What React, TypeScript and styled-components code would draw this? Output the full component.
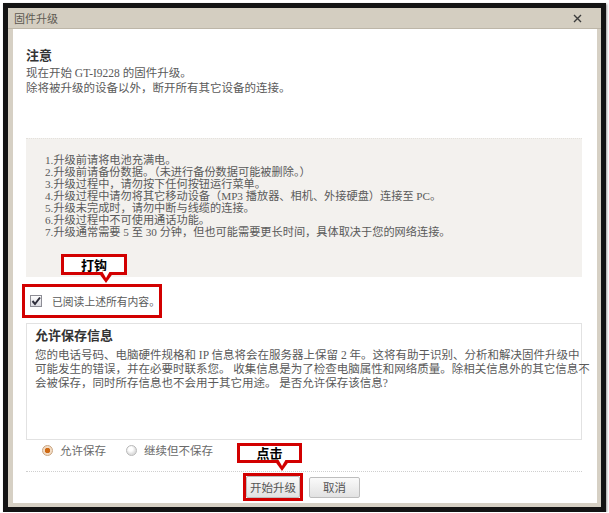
import React from 'react'
import styled, { createGlobalStyle } from 'styled-components'

const GlobalStyle = createGlobalStyle`
    html, body {
        margin: 0;
        padding: 0;
        background: #fff;
    }
    body {
        font-family: "Liberation Serif", "Noto Sans CJK SC", serif;
        color: #5a5a5a;
    }
`

const notices = [
    '1.升级前请将电池充满电。',
    '2.升级前请备份数据。（未进行备份数据可能被删除。）',
    '3.升级过程中，请勿按下任何按钮运行菜单。',
    '4.升级过程中请勿将其它移动设备（MP3 播放器、相机、外接硬盘）连接至 PC。',
    '5.升级未完成时，请勿中断与线缆的连接。',
    '6.升级过程中不可使用通话功能。',
    '7.升级通常需要 5 至 30 分钟，但也可能需要更长时间，具体取决于您的网络连接。',
]

const infoLines = [
    '您的电话号码、电脑硬件规格和 IP 信息将会在服务器上保留 2 年。这将有助于识别、分析和解决固件升级中',
    '可能发生的错误，并在必要时联系您。 收集信息是为了检查电脑属性和网络质量。除相关信息外的其它信息不',
    '会被保存，同时所存信息也不会用于其它用途。 是否允许保存该信息?',
]

const App = () => {
    return (
        <>
            <GlobalStyle />
            <Frame>
                <TitleBar>
                    <TitleText>固件升级</TitleText>
                    <svg width='9' height='9' viewBox='0 0 9 9'>
                        <path d='M1 1 L8 8 M8 1 L1 8' stroke='#3c3c3c' strokeWidth='1.4' />
                    </svg>
                </TitleBar>
                <Body>
                    <Heading>注意</Heading>
                    <Intro>
                        <div>现在开始 GT-I9228 的固件升级。</div>
                        <div>除将被升级的设备以外，断开所有其它设备的连接。</div>
                    </Intro>

                    <NoticeBox>
                        {notices.map((n) => (
                            <Line key={n}>{n}</Line>
                        ))}
                    </NoticeBox>

                    <ConfirmMark>
                        <Callout>打钩</Callout>
                        <CheckBox>
                            <svg width='10' height='10' viewBox='0 0 10 10'>
                                <path d='M1.5 5 L4 8 L9 1.5' stroke='#2e2e3a' strokeWidth='2' fill='none' />
                            </svg>
                        </CheckBox>
                        <CheckLabel>已阅读上述所有内容。</CheckLabel>
                    </ConfirmMark>

                    <InfoBox>
                        <InfoTitle>允许保存信息</InfoTitle>
                        <InfoText>
                            {infoLines.map((l) => (
                                <div key={l}>{l}</div>
                            ))}
                        </InfoText>
                    </InfoBox>

                    <RadioRow>
                        <RadioItem>
                            <Radio $checked />
                            允许保存
                        </RadioItem>
                        <RadioItem>
                            <Radio />
                            继续但不保存
                        </RadioItem>
                    </RadioRow>

                    <ButtonRow>
                        <ButtonMark>
                            <Callout>点击</Callout>
                            <Button $w={54} $h={22}>开始升级</Button>
                        </ButtonMark>
                        <Button $w={51} $h={21}>取消</Button>
                    </ButtonRow>
                </Body>
            </Frame>
        </>
    )
}

const Frame = styled.div`
    box-sizing: border-box;
    width: 603px;
    height: 509px;
    margin: 3px 0 0 3px;
    border: 5px solid #141414;
    background: #d6d0c4;
    display: flex;
    flex-direction: column;
    box-shadow: 1px 1px 2px rgba(0, 0, 0, 0.4);
`

const TitleBar = styled.div`
    height: 20px;
    flex: none;
    display: flex;
    align-items: center;
    justify-content: space-between;
    padding: 0 19px 0 6px;
    background: #d4cec1;
    border-bottom: 1px solid #bdb6a8;
`

const TitleText = styled.span`
    font-size: 11px;
    color: #5e5a52;
`

const Body = styled.div`
    flex: 1;
    margin: 0 4px 4px 5px;
    padding: 18px 15px 0 13px;
    background: #fff;
    display: flex;
    flex-direction: column;
    font-size: 11.5px;
`

const Heading = styled.div`
    font-size: 13px;
    font-weight: bold;
    line-height: 18px;
    color: #333;
`

const Intro = styled.div`
    margin-top: 1px;
    line-height: 15px;
    white-space: nowrap;
`

const NoticeBox = styled.div`
    box-sizing: border-box;
    margin-top: 42px;
    height: 139px;
    padding: 15px 19px 0;
    background: #f3f1ee;
    border-top: 1px dotted #e4e1dc;
    font-size: 11.2px;
`

const Line = styled.div`
    line-height: 12px;
    white-space: nowrap;
`

const ConfirmMark = styled.div`
    position: relative;
    box-sizing: border-box;
    margin: 7px 0 0 -4px;
    width: 140px;
    height: 34px;
    border: 3px solid #d20000;
    padding-left: 5px;
    display: flex;
    align-items: center;
`

const Callout = styled.div`
    position: absolute;
    left: 36px;
    top: -33px;
    box-sizing: border-box;
    width: 66px;
    height: 21px;
    border: 3px solid #d20000;
    background: #fff;
    color: #000;
    font-family: "Noto Sans CJK SC", sans-serif;
    font-weight: bold;
    font-size: 13px;
    line-height: 15px;
    text-align: center;
    z-index: 2;

    &::before {
        content: '';
        position: absolute;
        left: 34px;
        top: 100%;
        border-top: 11px solid #d20000;
        border-left: 8px solid transparent;
        border-right: 8px solid transparent;
    }

    &::after {
        content: '';
        position: absolute;
        left: 37.5px;
        top: calc(100% - 1px);
        border-top: 7px solid #fff;
        border-left: 4.5px solid transparent;
        border-right: 4.5px solid transparent;
    }
`

const CheckBox = styled.span`
    box-sizing: border-box;
    width: 12px;
    height: 12px;
    border: 1px solid #8d8d95;
    background: linear-gradient(#fdfdfd, #dcdce2);
    display: flex;
    align-items: center;
    justify-content: center;
`

const CheckLabel = styled.span`
    margin-left: 10px;
    font-size: 10.8px;
    white-space: nowrap;
`

const InfoBox = styled.div`
    box-sizing: border-box;
    margin-top: 5px;
    height: 117px;
    padding: 3px 8px 0;
    border: 1px solid #e2e2e2;
`

const InfoTitle = styled.div`
    font-size: 13px;
    font-weight: bold;
    line-height: 18px;
    color: #333;
`

const InfoText = styled.div`
    margin-top: 3px;
    line-height: 14px;
    white-space: nowrap;
`

const RadioRow = styled.div`
    margin-top: 2px;
    height: 16px;
    padding: 0 0 13px 16px;
    display: flex;
    align-items: center;
    gap: 20px;
    border-bottom: 1px dotted #cfcfcf;
`

const RadioItem = styled.label`
    display: flex;
    align-items: center;
    gap: 7px;
    color: #6a6a6a;
`

const Radio = styled.span<{ $checked?: boolean }>`
    box-sizing: border-box;
    width: 11px;
    height: 11px;
    border-radius: 50%;
    border: 1px solid ${(p) => (p.$checked ? '#c9a582' : '#b9b9b9')};
    background: ${(p) =>
        p.$checked
            ? 'radial-gradient(circle, #cf6a14 0 2.5px, #f3dcc4 3px)'
            : 'radial-gradient(circle at 40% 35%, #fff 0 2px, #dedede 5px)'};
`

const ButtonRow = styled.div`
    margin-top: 1px;
    padding-right: 5px;
    display: flex;
    justify-content: center;
    align-items: center;
    gap: 6px;
`

const ButtonMark = styled.div`
    position: relative;
    border: 3px solid #d20000;
    display: flex;

    ${Callout} {
        left: -9px;
        top: -33px;
        width: 65px;
        height: 20px;
        line-height: 14px;
    }
`

const Button = styled.button<{ $w: number; $h: number }>`
    box-sizing: border-box;
    width: ${(p) => p.$w}px;
    height: ${(p) => p.$h}px;
    padding: 0;
    border: 1px solid #bdbdbd;
    border-radius: 2px;
    background: linear-gradient(#fafafa, #e2e2e2);
    font-family: "Liberation Serif", "Noto Sans CJK SC", serif;
    font-size: 11.5px;
    color: #555;
`

export default App
